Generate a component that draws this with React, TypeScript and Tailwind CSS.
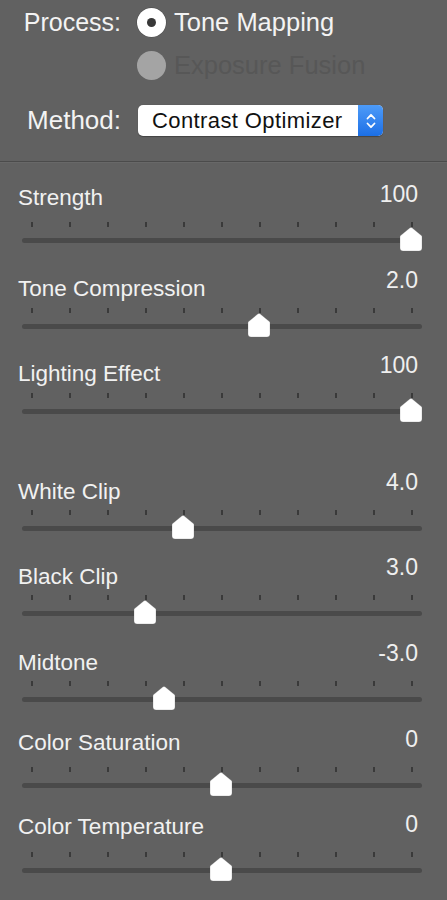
import React from "react";

type Row = { label: string; value: string; pos: number; labelMt: string; extra?: boolean };

const rows: Row[] = [
  { label: "Strength", value: "100", pos: 10, labelMt: "mt-[3px]" },
  { label: "Tone Compression", value: "2.0", pos: 6, labelMt: "mt-[8px]" },
  { label: "Lighting Effect", value: "100", pos: 10, labelMt: "mt-[8px]" },
  { label: "White Clip", value: "4.0", pos: 4, labelMt: "mt-[9px]", extra: true },
  { label: "Black Clip", value: "3.0", pos: 3, labelMt: "mt-[9px]" },
  { label: "Midtone", value: "-3.0", pos: 3.5, labelMt: "mt-[9px]" },
  { label: "Color Saturation", value: "0", pos: 5, labelMt: "mt-[3px]" },
  { label: "Color Temperature", value: "0", pos: 5, labelMt: "mt-[2px]" },
];

function Thumb() {
  return (
    <svg width="22" height="24" viewBox="0 0 22 24" className="block">
      <path
        d="M10 0.8 Q11 0 12 0.8 L21.4 8.6 Q22 9.1 22 10 L22 21 Q22 24 19 24 L3 24 Q0 24 0 21 L0 10 Q0 9.1 0.6 8.6 Z"
        fill="#ffffff"
        stroke="#4a4a4a"
        strokeOpacity="0.35"
        strokeWidth="0.6"
      />
    </svg>
  );
}

function Slider({ row }: { row: Row }) {
  const center = 31.7 + row.pos * 37.9; // page x of thumb center
  const left = center - 22 - 11;
  return (
    <div className={`flex flex-col ${row.extra ? "mt-[31px]" : ""}`}>
      <div className="flex justify-between items-start pl-[18px] pr-[29px] h-[23px]">
        <span className={`text-[22.5px] leading-[23px] text-[#f1f1f1] whitespace-nowrap ${row.labelMt}`}>
          {row.label}
        </span>
        <span className="text-[23px] leading-[23px] text-[#efefef]">{row.value}</span>
      </div>
      <div className="mt-[16px] ml-[30.7px] w-[382px] h-[5px] flex justify-between">
        {Array.from({ length: 11 }).map((_, i) => (
          <div key={i} className="w-[2px] h-[5px] bg-[#3a3a3a]" />
        ))}
      </div>
      <div className="relative ml-[22px] w-[400px] h-[24px] pt-[11px]">
        <div className="h-[5px] rounded-full bg-[#4a4a4a]" />
        <div className="absolute top-0" style={{ left }}>
          <Thumb />
        </div>
      </div>
    </div>
  );
}

export default function App() {
  return (
    <div
      className="w-[447px] h-[900px] overflow-hidden bg-[#616161]"
      style={{ fontFamily: '"Liberation Sans", Arial, sans-serif' }}
    >
      <div className="h-[161px] pt-[7px] flex flex-col">
        <div className="flex items-center h-[30px]">
          <div className="w-[121px] text-right text-[25px] leading-[30px] text-[#f3f3f3]">Process:</div>
          <div className="ml-[16px] w-[29px] h-[29px] rounded-full bg-white flex items-center justify-center shadow-[0_0_0_0.5px_rgba(0,0,0,0.25)]">
            <div className="w-[9px] h-[9px] rounded-full bg-[#383838]" />
          </div>
          <div className="ml-[8px] text-[25.5px] leading-[30px] text-[#f3f3f3]">Tone Mapping</div>
        </div>
        <div className="flex items-center h-[30px] mt-[13px]">
          <div className="w-[121px]" />
          <div className="ml-[16px] w-[29px] h-[29px] rounded-full bg-[#a4a4a4]" />
          <div className="ml-[8px] text-[25.5px] leading-[30px] text-[#575757]">Exposure Fusion</div>
        </div>
        <div className="flex items-center h-[31px] mt-[25px]">
          <div className="w-[121px] text-right text-[26px] leading-[31px] text-[#f3f3f3]">Method:</div>
          <div className="ml-[17px] w-[245px] h-[31px] rounded-[5px] bg-white flex items-center overflow-hidden shadow-[0_0.5px_1px_rgba(0,0,0,0.3)]">
            <div className="flex-1 pl-[14px] text-[22px] tracking-[0.4px] leading-[31px] text-[#111111] whitespace-nowrap">
              Contrast Optimizer
            </div>
            <div className="w-[25px] h-full bg-gradient-to-b from-[#4d9bf8] to-[#1b6fe6] flex items-center justify-center">
              <svg width="12" height="20" viewBox="0 0 12 20">
                <path d="M2.5 7.5 L6 3.8 L9.5 7.5" fill="none" stroke="#ffffff" strokeWidth="1.8" strokeLinecap="round" strokeLinejoin="round" />
                <path d="M2.5 12.5 L6 16.2 L9.5 12.5" fill="none" stroke="#ffffff" strokeWidth="1.8" strokeLinecap="round" strokeLinejoin="round" />
              </svg>
            </div>
          </div>
        </div>
      </div>
      <div className="h-px bg-[#4b4b4b]" />
      <div className="h-px bg-[#686868]" />
      <div className="pt-[20px] flex flex-col gap-[17.6px]">
        {rows.map((r) => (
          <Slider key={r.label} row={r} />
        ))}
      </div>
    </div>
  );
}
